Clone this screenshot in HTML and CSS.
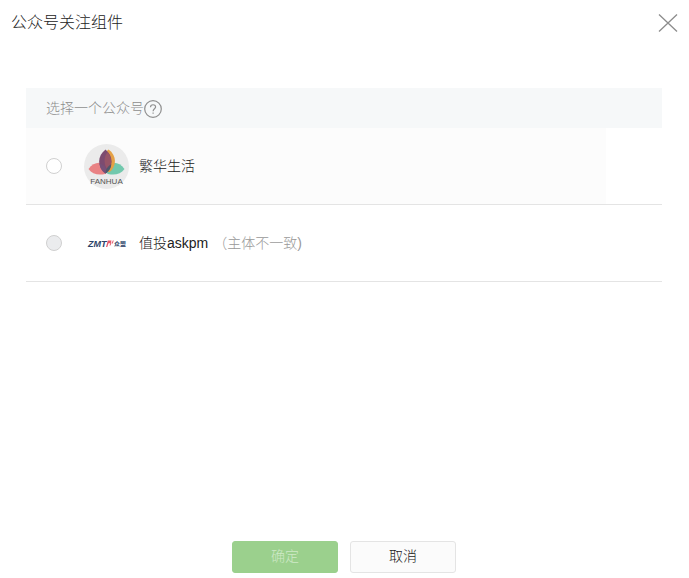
FILE: index.html
```html
<!DOCTYPE html>
<html lang="zh-CN">
<head>
    <meta charset="UTF-8">
    <meta name="viewport" content="width=device-width, initial-scale=1.0">
    <title>公众号关注组件</title>
    <link rel="stylesheet" href="styles.css">
</head>
<body>
    <form class="dialog">
        <header class="dialog-header">
            <h1>公众号关注组件</h1>
            <button type="button" class="close" aria-label="关闭">
                <svg width="20" height="20" viewBox="0 0 20 20">
                    <path d="M1 1.500L19 18.500M19 1.500L1 18.500" stroke="#8c8c8c" stroke-width="1.300" fill="none"/>
                </svg>
            </button>
        </header>

        <main class="dialog-body">
            <table class="account-table">
                <thead>
                    <tr>
                        <th colspan="2">
                            <div class="table-title">
                                <span>选择一个公众号</span>
                                <svg width="18" height="18" viewBox="0 0 18 18" fill="none" stroke="#8f8f8f" stroke-width="1.200">
                                    <circle cx="9" cy="9" r="8.300"/>
                                    <path d="M6.500 7.200C6.500 3.900 11.600 4 11.600 7C11.600 8.700 9.100 8.900 9.100 11.200"/>
                                    <path d="M9.100 12.400V13.800"/>
                                </svg>
                            </div>
                        </th>
                    </tr>
                </thead>
                <tbody>
                    <tr>
                        <td class="account-cell hover">
                            <label class="account">
                                <input type="radio" name="account" value="fanhua">
                                <svg class="avatar" viewBox="0 0 45 45">
                                    <circle cx="22.500" cy="22.500" r="22.500" fill="#ebebeb"/>
                                    <path d="M4.500 25C10 17 19 16.500 24.500 24C24.500 27 23 29 21 30C14 31.500 8 30 4.500 25Z" fill="#e98284"/>
                                    <path d="M40.500 25C35 17 26 16.500 20.500 24C20.500 27 22 29 24 30C31 31.500 37 30 40.500 25Z" fill="#72c8ad"/>
                                    <path d="M24.500 5.500C33 11 33 23 25 28.500C17 23 17 11 24.500 5.500Z" fill="#e5a146"/>
                                    <path d="M21.500 5.500C29.500 12 29.500 23 21.500 29.500C13 23 13 12 21.500 5.500Z" fill="#7c4b70"/>
                                    <path d="M23.500 8C28.500 14 28.500 21 24 26.500C19.500 21 19.500 13 23.500 8Z" fill="#965467"/>
                                    <path d="M21.500 29.500C17 27 15.800 23 15.700 19.600C20 21 22.500 24 23 28.500Z" fill="#765078"/>
                                    <path d="M21.500 29.500C21.500 26 23.500 22 27.300 20.300C27 24.500 25 27.500 21.500 29.500Z" fill="#4e586b"/>
                                    <text class="logo-fanhua" x="22.500" y="40" text-anchor="middle">FANHUA</text>
                                </svg>
                                <span class="name">繁华生活</span>
                            </label>
                        </td>
                        <td class="action-cell"></td>
                    </tr>
                    <tr>
                        <td class="account-cell">
                            <label class="account">
                                <input type="radio" name="account" value="askpm" disabled>
                                <svg class="avatar" viewBox="0 0 45 45">
                                    <text class="logo-zmt" x="4" y="26">ZMT</text>
                                    <path d="M22 26L23.800 19.500H27.500L26.800 22.200H24.500L23.300 26Z" fill="#e4596a"/>
                                    <path d="M26 24.500L27 21.500M28.300 22.500L29.200 19.500" stroke="#e4596a" stroke-width="1"/>
                                    <text class="logo-zhongmeng" x="30" y="25">众盟</text>
                                </svg>
                                <span class="name">值投askpm</span>
                                <span class="remark">（主体不一致)</span>
                            </label>
                        </td>
                        <td class="action-cell"></td>
                    </tr>
                </tbody>
            </table>
        </main>

        <footer class="dialog-footer">
            <button type="submit" class="btn btn-primary" disabled>确定</button>
            <button type="button" class="btn btn-default">取消</button>
        </footer>
    </form>
</body>
</html>
```

FILE: styles.css
```css
* {
    box-sizing: border-box;
}

body {
    margin: 0;
    background-color: #fff;
    color: #222;
    font-family: "Liberation Sans", "Noto Sans CJK SC", sans-serif;
    font-size: 14px;
    line-height: 20px;
}

button {
    font-family: inherit;
    cursor: pointer;
}

/* Dialog */
.dialog {
    display: flex;
    flex-direction: column;
    min-height: 100vh;
}

.dialog-header {
    display: flex;
    align-items: center;
    justify-content: space-between;
    padding: 11px;
}

.dialog-header h1 {
    margin: 0;
    font-size: 16px;
    font-weight: 300;
    line-height: 24px;
}

.close {
    display: flex;
    padding: 0;
    border: none;
    background: none;
}

.dialog-body {
    flex: 1;
    padding: 42px 27px 20px 26px;
}

/* Account list */
.account-table {
    width: 100%;
    border-spacing: 0;
}

.account-table th {
    height: 40px;
    padding: 0 20px;
    background-color: #f6f8f9;
    color: #8d8d8d;
    font-weight: 300;
    text-align: left;
}

.table-title {
    display: flex;
    align-items: center;
}

.table-title svg {
    margin-top: 2px;
}

.account-table td {
    height: 77px;
    padding: 0;
    border-bottom: 1px solid #e4e4e4;
}

.account-cell.hover {
    background-color: #fcfcfc;
}

.action-cell {
    width: 56px;
}

.account {
    display: flex;
    align-items: center;
    padding-left: 20px;
    font-weight: 300;
}

.account input {
    appearance: none;
    width: 16px;
    height: 16px;
    margin: 0 22px 0 0;
    border: 1px solid #d0d0d0;
    border-radius: 50%;
    background-color: #fff;
}

.account input:checked {
    border: 5px solid #44b549;
}

.account input:disabled {
    background-color: #ebecee;
}

.avatar {
    width: 45px;
    height: 45px;
    margin-right: 10px;
}

.logo-fanhua {
    font-size: 8px;
    fill: #555;
}

.logo-zmt {
    font-size: 9px;
    font-weight: bold;
    font-style: italic;
    fill: #2c4468;
}

.logo-zhongmeng {
    font-size: 6px;
    font-weight: bold;
    fill: #2c4468;
}

.remark {
    margin-left: 5px;
    color: #999;
}

/* Buttons */
.dialog-footer {
    display: flex;
    justify-content: center;
    gap: 12px;
    padding: 0 27px 5px 26px;
}

.btn {
    width: 106px;
    height: 32px;
    padding: 0 0 4px;
    border: 1px solid #e4e4e4;
    border-radius: 3px;
    font-size: 14px;
    font-weight: 300;
}

.btn-primary {
    border-color: #9bd08d;
    background-color: #9bd08d;
    color: #cfe9c7;
    cursor: not-allowed;
}

.btn-default {
    background-color: #fbfbfb;
    color: #222;
}
```
